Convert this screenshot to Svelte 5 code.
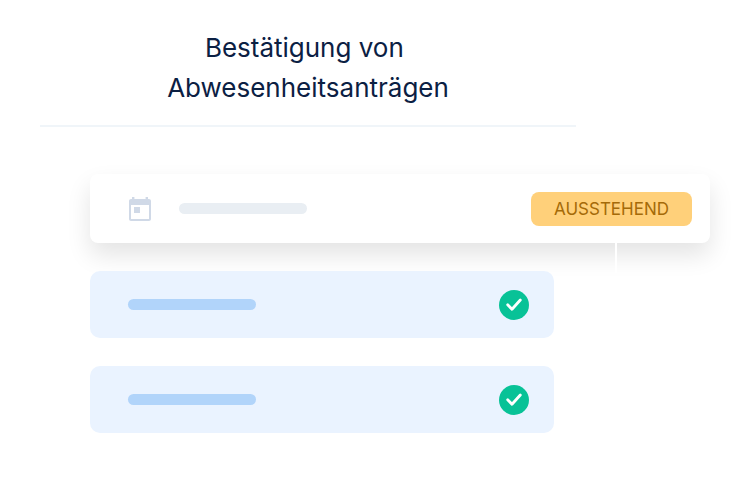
<script lang="ts">
  interface Request {
    id: number;
    status: string;
  }

  const pending = 'Ausstehend';
  const approved: Request[] = [
    { id: 1, status: 'Genehmigt' },
    { id: 2, status: 'Genehmigt' }
  ];
</script>

<section class="approvals">
  <header>
    <h2>Bestätigung von&nbsp;<br />Abwesenheitsanträgen</h2>
  </header>

  <ul class="requests">
    <li class="pending">
      <svg class="calendar" viewBox="0 0 22 24" aria-hidden="true">
        <path
          d="M20 2h-1V0h-2.4v2H5.4V0H3v2H2C.9 2 0 2.900 0 4v18c0 1.100.9 2 2 2h18c1.100 0 2-.9 2-2V4c0-1.100-.9-2-2-2zm0 20H2V8h18v14zM5 10h6v6H5z"
        />
      </svg>
      <span class="bar"></span>
      <span class="badge">{pending}</span>
    </li>
    {#each approved as request (request.id)}
      <li class="approved">
        <span class="bar"></span>
        <svg class="check" viewBox="0 0 30 30" role="img" aria-label={request.status}>
          <circle cx="15" cy="15" r="15" />
          <path d="M8.700 14.800l4.300 4.500 8.300-9.300" />
        </svg>
      </li>
    {/each}
  </ul>
</section>

<style>
  :global(body) {
    margin: 0;
    background: #fff;
  }

  .approvals {
    padding: 28px 26px 45px 40px;
    font-family: Inter, 'Liberation Sans', sans-serif;
  }

  header {
    margin-right: 134px;
    padding-bottom: 17px;
    border-bottom: 2px solid #f0f5f9;
  }

  h2 {
    margin: 0;
    color: #0b2043;
    font-size: 26px;
    font-weight: 400;
    line-height: 40px;
    text-align: center;
  }

  .requests {
    display: flex;
    flex-direction: column;
    gap: 28px;
    margin: 47px 0 0 50px;
    padding: 0;
    list-style: none;
  }

  li {
    display: flex;
    align-items: center;
    box-sizing: border-box;
    height: 67px;
    border-radius: 10px;
  }

  .pending {
    position: relative;
    height: 69px;
    padding: 0 18px 0 39px;
    background: #fff;
    border-radius: 8px;
    box-shadow: 0 12px 24px rgba(0, 0, 0, 0.11);
  }

  /* short connector hanging below the card */
  .pending::after {
    content: '';
    position: absolute;
    top: 100%;
    right: 93px;
    width: 2px;
    height: 30px;
    background: #fff;
  }

  .approved {
    position: relative;
    margin-right: 156px;
    padding: 0 25px 0 38px;
    background: #eaf3ff;
  }

  .bar {
    width: 128px;
    height: 11px;
    border-radius: 6px;
    background: #b1d4fa;
  }

  .pending .bar {
    margin-left: 28px;
    background: #e9eef3;
  }

  .calendar {
    width: 22px;
    height: 24px;
    fill: #d0d9e7;
  }

  .badge {
    margin-left: auto;
    padding: 0 23px;
    border-radius: 8px;
    background: #ffd07a;
    color: #a56a08;
    font-size: 17px;
    line-height: 34px;
    text-transform: uppercase;
  }

  .check {
    width: 30px;
    height: 30px;
    margin-left: auto;
  }

  .check circle {
    fill: #08c297;
  }

  .check path {
    fill: none;
    stroke: #fff;
    stroke-width: 2.8;
    stroke-linecap: round;
    stroke-linejoin: round;
  }
</style>
